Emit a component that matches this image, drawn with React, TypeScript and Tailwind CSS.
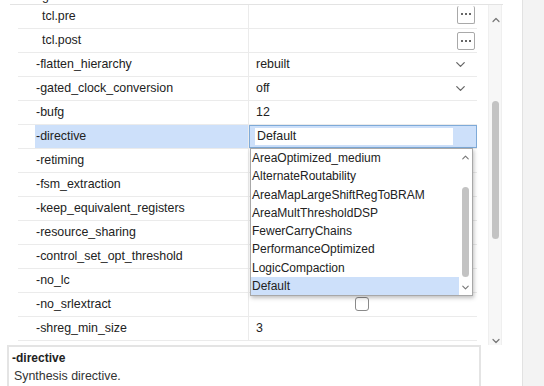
import { ChevronDown, ChevronUp } from 'lucide-react';

// property rows of the synthesis settings grid
type Row = {
    name: string;
    value?: string;
    kind?: 'dots' | 'select' | 'check' | 'text' | 'edit';
    tcl?: boolean;
};

const rows: Row[] = [
    { name: 'tcl.pre', kind: 'dots', tcl: true },
    { name: 'tcl.post', kind: 'dots', tcl: true },
    { name: '-flatten_hierarchy', value: 'rebuilt', kind: 'select' },
    { name: '-gated_clock_conversion', value: 'off', kind: 'select' },
    { name: '-bufg', value: '12', kind: 'text' },
    { name: '-directive', value: 'Default', kind: 'edit' },
    { name: '-retiming' },
    { name: '-fsm_extraction' },
    { name: '-keep_equivalent_registers' },
    { name: '-resource_sharing' },
    { name: '-control_set_opt_threshold' },
    { name: '-no_lc' },
    { name: '-no_srlextract', kind: 'check' },
    { name: '-shreg_min_size', value: '3', kind: 'text' },
];

const options = [
    'AreaOptimized_medium',
    'AlternateRoutability',
    'AreaMapLargeShiftRegToBRAM',
    'AreaMultThresholdDSP',
    'FewerCarryChains',
    'PerformanceOptimized',
    'LogicCompaction',
    'Default',
];

const DotsButton = ({ first }: { first?: boolean }) => (
    <div
        className={`w-[18px] h-[18px] border border-[#a9a9a9] rounded-[2px] flex items-center justify-center gap-[2px] bg-white ${first ? 'border-t-0 -mt-[4px] h-[15px]' : ''}`}
    >
        <span className="w-[2px] h-[2px] bg-[#666]" />
        <span className="w-[2px] h-[2px] bg-[#666]" />
        <span className="w-[2px] h-[2px] bg-[#666]" />
    </div>
);

const ValueCell = ({ row, index }: { row: Row; index: number }) => {
    if (row.kind === 'edit') {
        return (
            <div className="h-full w-full bg-[#cde0fa] border border-[#7eaad8] px-[5px] py-[2px]">
                <div className="h-full w-[198px] bg-white pl-[2px] flex items-center text-[#222]">{row.value}</div>
            </div>
        );
    }
    return (
        <div className="h-full w-full flex items-center pl-[7px] pr-[2px]">
            <span className="flex-1 text-[#222]">{row.value}</span>
            {row.kind === 'dots' && <DotsButton first={index === 0} />}
            {row.kind === 'select' && (
                <ChevronDown className="w-[15px] h-[15px] text-[#666] mr-[7px]" strokeWidth={2} />
            )}
            {row.kind === 'check' && (
                <div className="absolute left-[106px] top-[4px] w-[14px] h-[14px] border border-[#8a8a8a] rounded-[3px] bg-white" />
            )}
        </div>
    );
};

export default function App() {
    return (
        <div
            className="w-[544px] h-[386px] flex overflow-hidden bg-white text-[12.4px] text-[#222]"
            style={{ fontFamily: '"Liberation Sans", Arial, sans-serif' }}
        >
            {/* 左側：プロパティグリッド */}
            <div className="w-[522px] relative flex flex-col">
                <div className="h-[5px] overflow-hidden ml-[10px] w-[493px] border-b border-[#e3e3e3] relative">
                    <span className="absolute left-[32px] -top-[11px] leading-[15px]">g</span>
                </div>
                <div className="flex h-[335px]">
                    <div className="w-[477px] flex flex-col">
                        {rows.map((row, i) => (
                            <div key={row.name} className="flex h-[24px] shrink-0 ml-[18px] border-b border-[#ebebeb]">
                                <div className="w-[230px] flex">
                                    <div className="w-[17px]" />
                                    <div
                                        className={`flex-1 flex items-center ${row.tcl ? 'pl-[7px]' : 'pl-[1px]'} ${row.kind === 'edit' ? 'bg-[#cde0fa]' : ''}`}
                                    >
                                        {row.name}
                                    </div>
                                </div>
                                <div className="flex-1 border-l border-[#ebebeb] relative">
                                    <ValueCell row={row} index={i} />
                                </div>
                            </div>
                        ))}
                    </div>
                    {/* スクロールバー */}
                    <div className="ml-[11px] w-[14px] h-[340px] bg-[#f7f7f7] border-x border-[#efefef] flex flex-col items-center">
                        <ChevronUp className="w-[12px] h-[12px] text-[#777] mt-[9px] ml-[2px]" strokeWidth={2.4} />
                        <div className="w-[7px] h-[138px] bg-[#c3c3c3] rounded-full mt-[75px]" />
                        <div className="flex-1" />
                        <ChevronDown className="w-[12px] h-[12px] text-[#777] mb-[-2px] ml-[2px]" strokeWidth={2.4} />
                    </div>
                </div>

                {/* 説明パネル */}
                <div className="ml-[7px] mt-[5px] w-[474px] flex-1 border-2 border-b-0 border-[#e4e4e4] px-[3px] pt-[3px]">
                    <div className="font-bold text-[12px] leading-[16px]">-directive</div>
                    <div className="text-[12.4px] leading-[18px] pl-[2px] mt-[1px] text-[#333]">Synthesis directive.</div>
                </div>

                {/* ドロップダウン */}
                <div className="absolute left-[250px] top-[148px] w-[223px] h-[148px] bg-white border border-[#a8a8a8] shadow-[1px_2px_4px_rgba(0,0,0,0.25)] flex text-[12px]">
                    <div className="flex-1 flex flex-col">
                        {options.map((opt) => (
                            <div
                                key={opt}
                                className={`h-[18.4px] leading-[18px] pl-[1px] ${opt === 'Default' ? 'bg-[#cde0fa]' : ''}`}
                            >
                                {opt}
                            </div>
                        ))}
                    </div>
                    <div className="w-[13px] flex flex-col items-center">
                        <ChevronUp className="w-[11px] h-[11px] text-[#777] mt-[3px]" strokeWidth={2.4} />
                        <div className="w-[7px] h-[90px] bg-[#c3c3c3] rounded-full mt-[24px]" />
                        <div className="flex-1" />
                        <ChevronDown className="w-[11px] h-[11px] text-[#777] mb-[2px]" strokeWidth={2.4} />
                    </div>
                </div>
            </div>

            {/* 右端 */}
            <div className="flex-1 border-l border-[#e2e2e2] bg-[#f3f3f3]" />
        </div>
    );
}
